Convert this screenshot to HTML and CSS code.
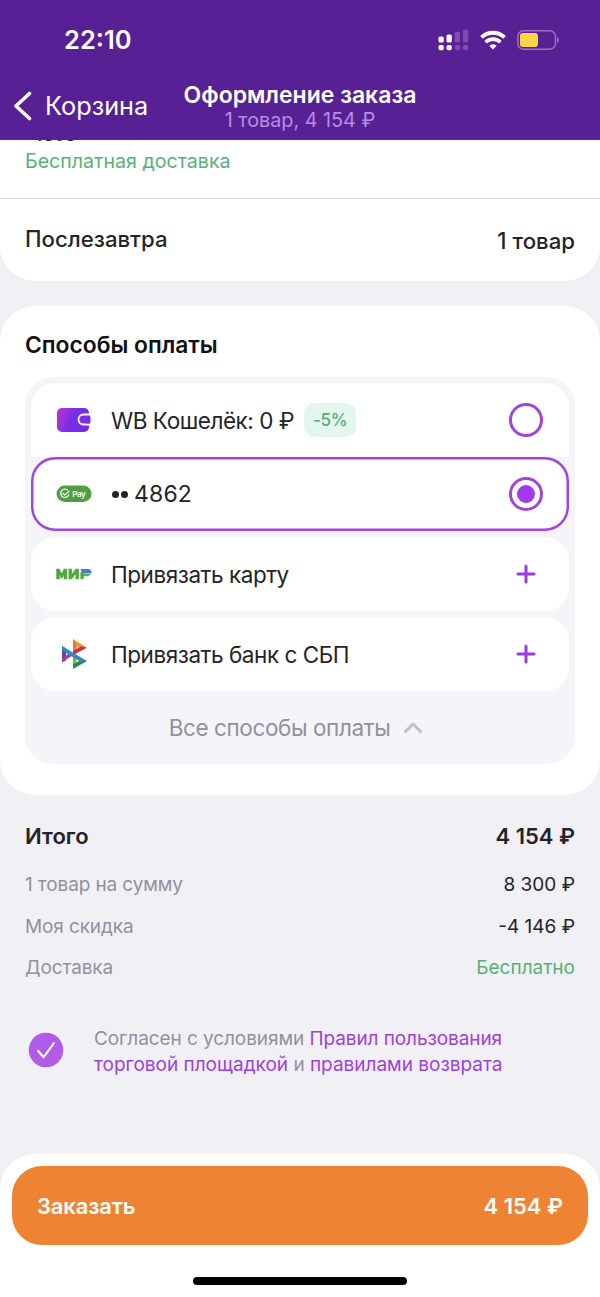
FILE: index.html
```html
<!DOCTYPE html>
<html lang="ru">
<head>
<meta charset="utf-8">
<title>Оформление заказа</title>
<link rel="stylesheet" href="styles.css">
</head>
<body>
<div class="app">
  <header class="header">
    <div class="status">
      <span class="clock">22:10</span>
      <div class="status-icons">
        <svg class="signal" width="31" height="22" viewBox="0 0 31 22">
          <g fill="#fff"><rect x="0.5" y="7.500" width="5.300" height="6" rx="1.500"/><rect x="8.500" y="5.500" width="5.300" height="8" rx="1.500"/><rect x="0.5" y="16" width="5.300" height="5.300" rx="1.700"/><rect x="8.500" y="16" width="5.300" height="5.300" rx="1.700"/></g>
          <g fill="#7c4fae"><rect x="16.700" y="3" width="5.300" height="10.500" rx="1.500"/><rect x="25" y="0.500" width="5.300" height="13" rx="1.500"/><rect x="16.700" y="16" width="5.300" height="5.300" rx="1.700"/><rect x="25" y="16" width="5.300" height="5.300" rx="1.700"/></g>
        </svg>
        <svg class="wifi" width="26" height="20" viewBox="0 0 26 20">
          <g fill="none" stroke="#fff" stroke-width="4"><path d="M1.500 7.400a16.500 16.500 0 0 1 23 0"/><path d="M5.600 12.300a10.300 10.300 0 0 1 14.800 0" stroke-width="3.600"/></g>
          <path d="M13 19.500l-3.700-3.800a5.300 5.300 0 0 1 7.400 0z" fill="#fff"/>
        </svg>
        <svg class="battery" width="43" height="20" viewBox="0 0 43 20">
          <rect x="0.800" y="0.800" width="37.600" height="18.400" rx="5.500" fill="none" stroke="#9a75c2" stroke-width="1.500"/>
          <rect x="3" y="3" width="18" height="14" rx="3" fill="#fad646"/>
          <path d="M40 7v6q2-1 2-3t-2-3z" fill="#9a75c2"/>
        </svg>
      </div>
    </div>
    <nav class="nav">
      <div class="back">
        <svg width="20" height="30" viewBox="0 0 20 30"><path d="M16.500 2.500L3 15l13.500 12.500" fill="none" stroke="#fff" stroke-width="3.600" stroke-linecap="round" stroke-linejoin="round"/></svg>
        <span class="back-label">Корзина</span>
      </div>
      <div class="titles">
        <h1 class="title">Оформление заказа</h1>
        <p class="subtitle">1 товар, 4 154 ₽</p>
      </div>
    </nav>
  </header>

  <section class="delivery">
    <div class="price">4898</div>
    <div class="free"><span class="free-text">Бесплатная доставка</span></div>
    <div class="day"><span class="day-name">Послезавтра</span><span class="day-count">1 товар</span></div>
  </section>

  <section class="payment">
    <h2 class="payment-title">Способы оплаты</h2>
    <div class="methods">
      <div class="method">
        <span class="logo"><svg width="36" height="26" viewBox="0 0 36 26">
          <defs><linearGradient id="wallet" x1="0" y1="0" x2="1" y2="0.300"><stop offset="0" stop-color="#bd32d2"/><stop offset="0.600" stop-color="#7230e8"/><stop offset="1" stop-color="#7a28e0"/></linearGradient></defs>
          <rect x="1" y="1" width="32" height="24" rx="5" fill="url(#wallet)"/>
          <path d="M36 7.500H27.500a5 5 0 0 0 0 10H36" fill="#7930e0" stroke="#fff" stroke-width="1.800"/>
          <rect x="33.600" y="6" width="2.400" height="13" fill="#fff"/><rect x="30" y="8.700" width="4.500" height="7.700" rx="1.500" fill="#7930e0"/>
        </svg></span>
        <span class="label">WB Кошелёк: 0 ₽</span><span class="discount">-5%</span>
        <span class="radio"></span>
      </div>
      <div class="method selected">
        <span class="logo"><svg width="36" height="18" viewBox="0 0 36 18">
          <rect x="0.500" y="0.500" width="35" height="16.500" rx="8.250" fill="#4d9f43"/>
          <path d="M12.200 5.700A4.200 4.200 0 1 0 12.900 9.500M6.500 8l2.300 2 4.600-3.900" fill="none" stroke="#fff" stroke-width="1.200"/>
          <text class="pay-text" x="16.300" y="11.600" textLength="13.500">Pay</text>
        </svg></span>
        <span class="label card-label"><i class="dot"></i><i class="dot"></i>4862</span>
        <span class="radio checked"></span>
      </div>
      <div class="method">
        <span class="logo"><svg width="36" height="12" viewBox="0 0 36 12">
          <g fill="#52a63e" stroke="#52a63e" stroke-width="0.500"><path d="M0.500 11V1h3l2.200 5 2.200-5h3v10H8V5.800L6.400 10H5L3.400 5.800V11z"/><path d="M12.800 11V1h3v5.500L19.700 1h3v10h-3V5.500L15.800 11z"/><path d="M24.700 11V4.500h2.800v1.800h6.800Q33.500 8 31 8h-3.500v3z"/></g>
          <path d="M24.500 1H32q3.500 0 3.500 3.500v1H28.500Q25 5 24.500 1z" fill="#3c83cb"/>
        </svg></span>
        <span class="label">Привязать карту</span>
        <svg class="plus" width="20" height="20" viewBox="0 0 20 20"><path d="M10 2v16M2 10h16" stroke="#9b38e8" stroke-width="3" stroke-linecap="round"/></svg>
      </div>
      <div class="method">
        <span class="logo"><svg width="26" height="32" viewBox="0 0 26 32">
          <path d="M1 8l4 2.500v12L1 24.300z" fill="#65459a"/>
          <path d="M1 24.300l11-7-3-2.500-8 5.500z" fill="#9c4787"/>
          <path d="M12 1l14 8.700-6 1.500-8-4.700z" fill="#e99a35"/><path d="M12 1v16l3.500-2V7z" fill="#ec742c"/><path d="M12 17l14-7.300-6-1.200-8 4.500z" fill="#c92d50"/>
          <path d="M12 15v16l3.500-6.500V19z" fill="#72b943"/><path d="M12 31l14-8-6-1-8 4.500z" fill="#278548"/>
          <path d="M1 8l25 15-6 1L1 12.500z" fill="#3489bf"/>
        </svg></span>
        <span class="label">Привязать банк с СБП</span>
        <svg class="plus" width="20" height="20" viewBox="0 0 20 20"><path d="M10 2v16M2 10h16" stroke="#9b38e8" stroke-width="3" stroke-linecap="round"/></svg>
      </div>
      <div class="all"><span class="all-label">Все способы оплаты</span>
        <svg width="18" height="12" viewBox="0 0 18 12"><path d="M1.500 9.500L9 2l7.500 7.500" fill="none" stroke="#bdbdc5" stroke-width="3" stroke-linecap="round" stroke-linejoin="round"/></svg>
      </div>
    </div>
  </section>

  <section class="summary">
    <div class="row total"><span>Итого</span><span>4 154 ₽</span></div>
    <div class="row"><span>1 товар на сумму</span><span class="value">8 300 ₽</span></div>
    <div class="row"><span>Моя скидка</span><span class="value">-4 146 ₽</span></div>
    <div class="row"><span>Доставка</span><span class="value green">Бесплатно</span></div>
  </section>

  <section class="agree">
    <svg width="36" height="36" viewBox="0 0 36 36"><circle cx="18" cy="18" r="17.300" fill="#b05ce8"/><path d="M10 18.800l5.500 6.500L26 11" fill="none" stroke="#fff" stroke-width="2.100" stroke-linecap="round" stroke-linejoin="round"/></svg>
    <p class="agree-text"><span class="line1">Согласен с условиями <a>Правил пользования</a></span><br><span class="line2"><a>торговой площадкой</a> и <a>правилами возврата</a></span></p>
  </section>

  <footer class="footer">
    <div class="order"><span class="order-label">Заказать</span><span>4 154 ₽</span></div>
    <div class="home"></div>
  </footer>
</div>
</body>
</html>
```
FILE: styles.css
```css
* { box-sizing: border-box; }
body { margin: 0; background: #f1f0f5; font-family: Inter, "Liberation Sans", sans-serif; color: #242428; }
h1, h2, p { margin: 0; }
span { white-space: nowrap; }
.app { width: 600px; height: 1297px; display: flex; flex-direction: column; overflow: hidden; }
.header { position: relative; z-index: 1; height: 140px; background: #582095; color: #fff; display: flex; flex-direction: column; }
.status { height: 80px; display: flex; justify-content: space-between; align-items: center; padding: 0 40px 0 64px; }
.clock { font-size: 25.500px; font-weight: 600; line-height: 30px; }
.status-icons { display: flex; align-items: center; }
.wifi { margin: 0 11px; }
.nav { height: 60px; display: grid; grid-template-columns: 170px 260px 170px; }
.back { display: flex; align-items: center; padding: 0 0 8px 13px; height: 60px; }
.back-label { font-size: 25.300px; line-height: 30px; margin-left: 12px; }
.titles { text-align: center; padding-top: 1px; }
.title { font-size: 23px; line-height: 28px; font-weight: 600; white-space: nowrap; }
.subtitle { font-size: 19.800px; line-height: 22px; color: #b68ee0; white-space: nowrap; }
.delivery { height: 141px; background: #fff; border-radius: 0 0 35px 35px; display: flex; flex-direction: column; }
/* The price row is scrolled under the header */
.price { height: 20px; margin: -15px 0 -5px 32px; font-size: 17px; font-weight: 600; line-height: 20px; }
.free { height: 59px; padding: 8px 25px 0; border-bottom: 1px solid #dedee2; color: #57b176; font-size: 19.600px; line-height: 26px; }
.day { height: 82px; display: flex; justify-content: space-between; align-items: center; padding: 0 25px; font-size: 22.200px; font-weight: 500; }
.day-name { margin-bottom: 3px; }
.payment { height: 489px; margin-top: 25px; padding: 24px 25px 0; background: #fff; border-radius: 35px; }
.payment-title { font-size: 22.800px; line-height: 29px; font-weight: 600; color: #111; }
.methods { height: 387px; margin-top: 18px; padding: 6px; background: #f5f4f9; border-radius: 28px; display: flex; flex-direction: column; }
.method { height: 74px; padding: 0 26px 0 25px; margin-bottom: 6px; background: #fff; border-radius: 24px; display: flex; align-items: center; }
.method:first-child { margin: 0; border-radius: 24px 24px 0 0; }
.selected { box-shadow: inset 0 0 0 2.500px #a044e0; padding-bottom: 1px; }
.logo { width: 36px; display: flex; justify-content: center; }
.pay-text { font-size: 8px; font-weight: 600; fill: #fff; }
.label { margin-left: 19px; font-size: 22.500px; line-height: 28px; letter-spacing: -0.450px; padding-top: 1px; }
.card-label { display: flex; align-items: center; font-size: 23px; letter-spacing: 0.150px; padding: 0; }
.dot { width: 7px; height: 7px; margin: 1px 1px 0 1px; border-radius: 50%; background: #242428; }
.dot + .dot { margin-right: 6px; }
.discount { width: 52px; height: 34px; margin-left: 10px; border-radius: 10px; background: #e3f7ee; color: #54ae75; font-size: 17px; font-weight: 500; line-height: 35px; letter-spacing: -0.300px; text-align: center; }
.radio, .plus { margin-left: auto; }
.radio { width: 34px; height: 34px; border: 3px solid #a044e0; border-radius: 50%; }
.checked { display: grid; place-items: center; }
.checked::after { content: ""; width: 18px; height: 18px; border-radius: 50%; background: #a238f0; }
.plus { margin-right: 7px; }
.all { flex: 1; display: flex; justify-content: center; align-items: center; gap: 14px; color: #92909e; font-size: 22.500px; letter-spacing: -0.400px; padding-right: 9px; }
.summary { height: 196px; padding: 22px 25px 0; color: #92909e; font-size: 19px; letter-spacing: -0.120px; }
.row { height: 41.500px; line-height: 41.500px; display: flex; justify-content: space-between; }
.total { height: 47px; line-height: 38px; font-size: 22px; font-weight: 600; letter-spacing: 0; color: #242428; }
.value { color: #242428; letter-spacing: 0; }
.green { color: #57b176; }
.agree { height: 163px; display: flex; padding: 34px 25px 0 28px; gap: 30px; color: #92909e; }
.agree svg { margin-top: 7px; flex: none; }
.agree-text { font-size: 19px; line-height: 26px; padding-top: 1px; }
.line1 { letter-spacing: -0.080px; }
.line2 { letter-spacing: -0.010px; }
.agree-text a { color: #9d40de; }
.footer { height: 143px; padding: 12px; background: #fff; border-radius: 35px 35px 0 0; display: flex; flex-direction: column; align-items: center; }
.order { width: 576px; height: 80px; padding: 0 25px; border-radius: 30px; background: #ee8433; color: #fff; display: flex; justify-content: space-between; align-items: center; font-size: 22px; font-weight: 600; }
.order-label { letter-spacing: -0.150px; }
.home { width: 214px; height: 8px; margin-top: 32px; border-radius: 4px; background: #000; }
```
